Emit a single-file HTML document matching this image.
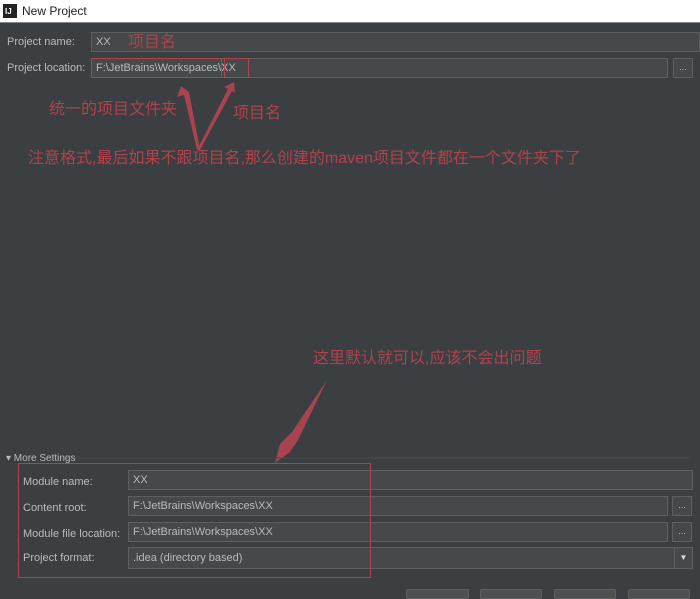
<!DOCTYPE html>
<html><head><meta charset="utf-8"><style>
*{margin:0;padding:0;box-sizing:border-box}
body{width:700px;height:593px;overflow:hidden;background:#3c3f41;font-family:"Liberation Sans","Noto Sans CJK SC",sans-serif;font-size:11px;color:#bbbbbb;position:relative}
.t{position:absolute;left:0;top:0;width:700px;height:23px;background:#fff;border-bottom:1px solid #888;color:#222;font-size:12px}
.a{position:absolute}
.f{position:absolute;background:#45494a;border:1px solid #5e6060;color:#bbb;padding-left:4px;line-height:18px;font-size:11px}
.b{position:absolute;width:20px;height:20px;background:#45494a;border:1px solid #5e6060;color:#bbb;text-align:center;font-size:9px;line-height:16px}
.r{color:#b0424e;font-size:16px;position:absolute;line-height:18px}
.red{position:absolute;border:1px solid #b0424e}
.btn{position:absolute;top:589px;height:10px;background:#4c5052;border:1px solid #5e6060;border-radius:2px}
</style></head><body>
<div class="t"><div class="a" style="left:3px;top:4px;width:14px;height:14px;background:#222;color:#fff;font-size:8px;font-weight:bold;line-height:16px;padding-left:2px">IJ</div><div class="a" style="left:22px;top:4px">New Project</div></div>
<div class="a" style="left:7px;top:36px">Project name:</div>
<div class="f" style="left:91px;top:32px;width:609px;height:20px">XX</div>
<div class="r" style="left:128px;top:34px">项目名</div>
<div class="a" style="left:7px;top:62px">Project location:</div>
<div class="f" style="left:91px;top:58px;width:577px;height:20px">F:\JetBrains\Workspaces\XX</div>
<div class="b" style="left:673px;top:58px">...</div>
<div class="red" style="left:91px;top:58px;width:131px;height:20px"></div>
<div class="red" style="left:224px;top:58px;width:25px;height:20px"></div>
<div class="r" style="left:49px;top:101px">统一的项目文件夹</div>
<div class="r" style="left:233px;top:105px">项目名</div>
<div class="r" style="left:28px;top:150px">注意格式,最后如果不跟项目名,那么创建的maven项目文件都在一个文件夹下了</div>
<div class="r" style="left:313px;top:350px">这里默认就可以,应该不会出问题</div>
<svg class="a" style="left:0;top:0" width="700" height="593">
<polygon points="181,86 177,97 184,95 197,150 200,150 189,92" fill="#a8434f"/>
<polygon points="234,82 224,87 228,89 197,150 200,150 232,91 235,93" fill="#a8434f"/>
<polygon points="327,380 292,432 280,444 275,463 290,452 298,440" fill="#a8434f"/>
<line x1="50" y1="458" x2="690" y2="458" stroke="#4a4d4f"/>
</svg>
<div class="a" style="left:6px;top:453px;font-size:10px">▾ More Settings</div>
<div class="a" style="left:23px;top:476px">Module name:</div>
<div class="f" style="left:128px;top:470px;width:565px;height:20px">XX</div>
<div class="a" style="left:23px;top:502px">Content root:</div>
<div class="f" style="left:128px;top:496px;width:540px;height:20px">F:\JetBrains\Workspaces\XX</div>
<div class="b" style="left:672px;top:496px">...</div>
<div class="a" style="left:23px;top:528px">Module file location:</div>
<div class="f" style="left:128px;top:522px;width:540px;height:20px">F:\JetBrains\Workspaces\XX</div>
<div class="b" style="left:672px;top:522px">...</div>
<div class="a" style="left:23px;top:552px">Project format:</div>
<div class="f" style="left:128px;top:547px;width:565px;height:22px;line-height:20px">.idea (directory based)</div>
<div class="a" style="left:674px;top:548px;width:18px;height:20px;border-left:1px solid #5e6060;color:#ddd;font-size:8px;text-align:center;line-height:20px">▼</div>
<div class="red" style="left:18px;top:463px;width:353px;height:115px"></div>
<div class="btn" style="left:406px;width:63px"></div>
<div class="btn" style="left:480px;width:62px"></div>
<div class="btn" style="left:554px;width:62px"></div>
<div class="btn" style="left:628px;width:62px"></div>
</body></html>
